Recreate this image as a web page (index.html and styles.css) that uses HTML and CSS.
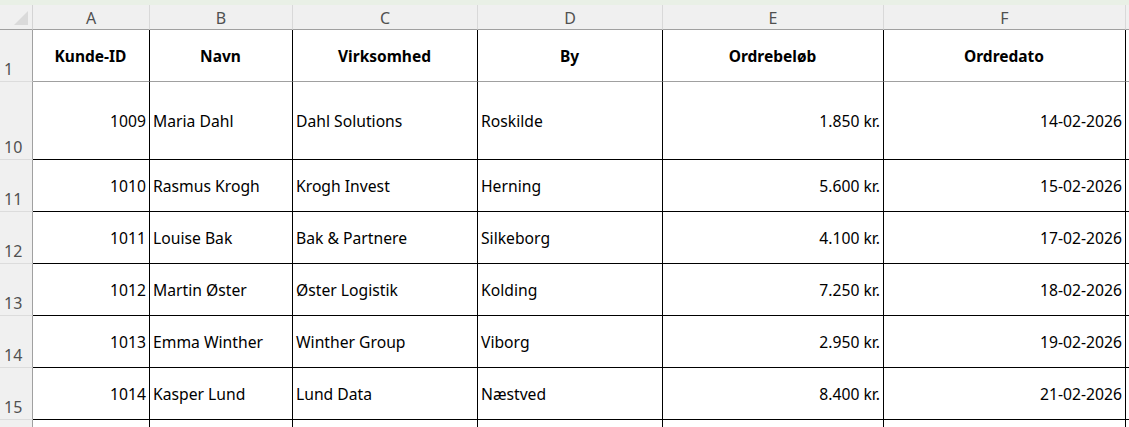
FILE: index.html
```html
<!DOCTYPE html>
<html lang="da">
<head>
<meta charset="utf-8">
<title>Ark</title>
<link rel="stylesheet" href="styles.css">
</head>
<body>
<div class="topstrip"></div>
<div class="sheet">
  <div class="corner"><span class="tri"></span></div>
  <div class="colhead">A</div>
  <div class="colhead">B</div>
  <div class="colhead">C</div>
  <div class="colhead">D</div>
  <div class="colhead">E</div>
  <div class="colhead">F</div>
  <div class="colhead rest"></div>

  <div class="rowhead r1">1</div>
  <div class="cell hdr">Kunde-ID</div>
  <div class="cell hdr">Navn</div>
  <div class="cell hdr">Virksomhed</div>
  <div class="cell hdr">By</div>
  <div class="cell hdr">Ordrebeløb</div>
  <div class="cell hdr">Ordredato</div>
  <div class="cell rest hdrrest"></div>

  <div class="rowhead">10</div>
  <div class="cell num">1009</div>
  <div class="cell">Maria Dahl</div>
  <div class="cell">Dahl Solutions</div>
  <div class="cell">Roskilde</div>
  <div class="cell num">1.850 kr.</div>
  <div class="cell num">14-02-2026</div>
  <div class="cell rest"></div>

  <div class="rowhead">11</div>
  <div class="cell num">1010</div>
  <div class="cell">Rasmus Krogh</div>
  <div class="cell">Krogh Invest</div>
  <div class="cell">Herning</div>
  <div class="cell num">5.600 kr.</div>
  <div class="cell num">15-02-2026</div>
  <div class="cell rest"></div>

  <div class="rowhead">12</div>
  <div class="cell num">1011</div>
  <div class="cell">Louise Bak</div>
  <div class="cell">Bak &amp; Partnere</div>
  <div class="cell">Silkeborg</div>
  <div class="cell num">4.100 kr.</div>
  <div class="cell num">17-02-2026</div>
  <div class="cell rest"></div>

  <div class="rowhead">13</div>
  <div class="cell num">1012</div>
  <div class="cell">Martin Øster</div>
  <div class="cell">Øster Logistik</div>
  <div class="cell">Kolding</div>
  <div class="cell num">7.250 kr.</div>
  <div class="cell num">18-02-2026</div>
  <div class="cell rest"></div>

  <div class="rowhead">14</div>
  <div class="cell num">1013</div>
  <div class="cell">Emma Winther</div>
  <div class="cell">Winther Group</div>
  <div class="cell">Viborg</div>
  <div class="cell num">2.950 kr.</div>
  <div class="cell num">19-02-2026</div>
  <div class="cell rest"></div>

  <div class="rowhead">15</div>
  <div class="cell num">1014</div>
  <div class="cell">Kasper Lund</div>
  <div class="cell">Lund Data</div>
  <div class="cell">Næstved</div>
  <div class="cell num">8.400 kr.</div>
  <div class="cell num">21-02-2026</div>
  <div class="cell rest"></div>

  <div class="rowhead last"></div>
  <div class="cell last"></div>
  <div class="cell last"></div>
  <div class="cell last"></div>
  <div class="cell last"></div>
  <div class="cell last"></div>
  <div class="cell last"></div>
  <div class="cell rest last"></div>
</div>
</body>
</html>
```

FILE: styles.css
```css
html, body {
  margin: 0;
  padding: 0;
  background: #ffffff;
  overflow: hidden;
}
body {
  width: 1129px;
  height: 427px;
  font-family: "Noto Sans", "Liberation Sans", sans-serif;
  color: #000;
}
.topstrip {
  height: 5px;
  background: #e9f0e6;
}
.sheet {
  display: grid;
  grid-template-columns: 33px 117px 143px 185px 185px 221px 242px 3px;
  grid-template-rows: 25px 52px 78px 52px 52px 52px 52px 52px 20px;
}
.corner {
  background: #f0f0f0;
  border-right: 1px solid #d4d4d4;
  border-bottom: 1px solid #a0a0a0;
  box-sizing: border-box;
  position: relative;
}
.tri {
  position: absolute;
  right: 4px;
  bottom: 4px;
  width: 0;
  height: 0;
  border-left: 14px solid transparent;
  border-bottom: 14px solid #dadada;
}
.colhead {
  background: #f0f0f0;
  border-right: 1px solid #d9d9d9;
  border-bottom: 1px solid #a0a0a0;
  box-sizing: border-box;
  display: flex;
  align-items: center;
  justify-content: center;
  font-size: 16px;
  color: #505050;
  padding-top: 1px;
}
.colhead.rest {
  border-right: none;
}
.rowhead {
  background: #f0f0f0;
  border-right: 1px solid #a0a0a0;
  border-bottom: 1px solid #dcdcdc;
  box-sizing: border-box;
  display: flex;
  align-items: flex-end;
  padding-left: 4px;
  padding-bottom: 1px;
  font-size: 16px;
  color: #505050;
}
.rowhead.last {
  border-bottom: none;
}
.cell {
  border-right: 1px solid #000;
  border-bottom: 1px solid #000;
  box-sizing: border-box;
  display: flex;
  align-items: center;
  padding: 0 4px 0 3px;
  font-size: 15.7px;
  white-space: nowrap;
  overflow: hidden;
}
.cell.num {
  justify-content: flex-end;
  padding-right: 3px;
}
.cell.hdr {
  justify-content: center;
  font-weight: bold;
  font-size: 15.5px;
  border-bottom: 1px solid #a0a0a0;
}
.cell.rest {
  border-right: none;
  padding: 0;
}
.cell.hdrrest {
  border-bottom: 1px solid #a0a0a0;
}
.cell.last {
  border-bottom: none;
}
```
